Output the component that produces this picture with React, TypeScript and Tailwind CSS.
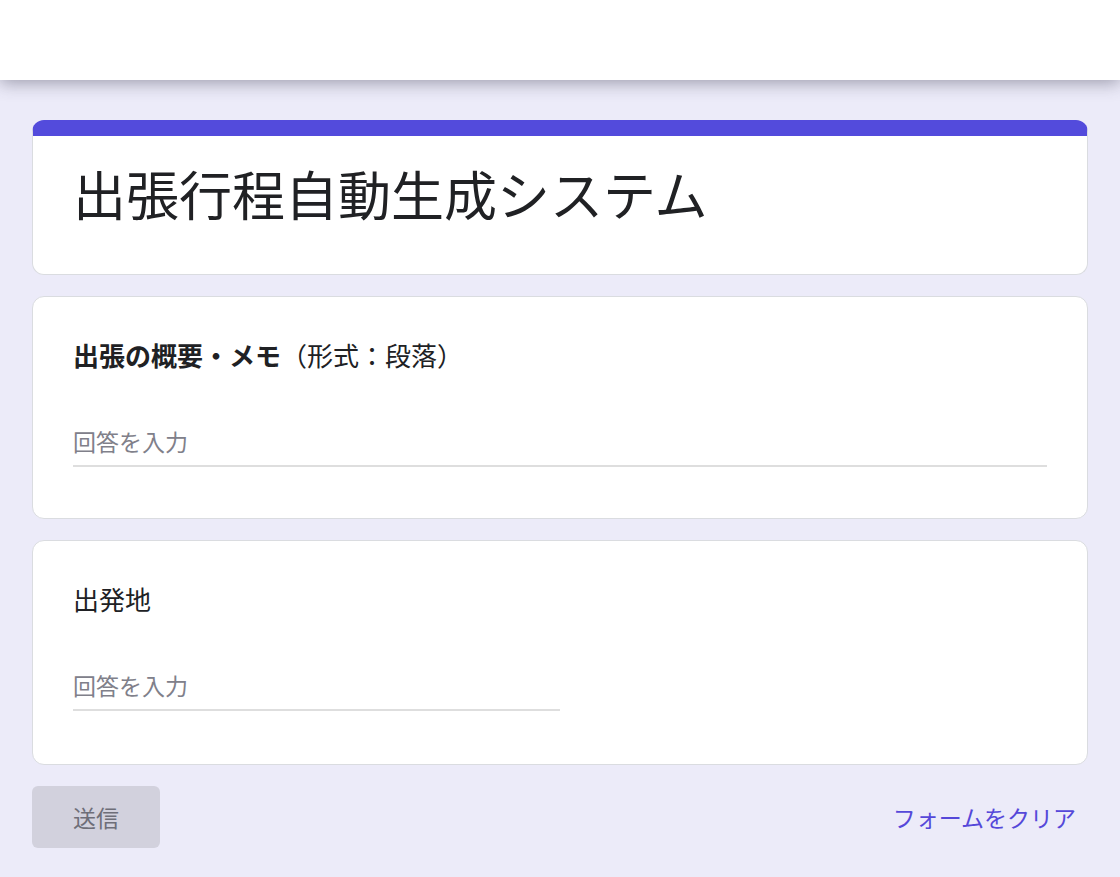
import { useState } from "react";

const font = {
  fontFamily: '"Noto Sans CJK JP", "Noto Sans", sans-serif',
};

function QuestionCard({
  label,
  note,
  bold,
  half,
}: {
  label: string;
  note?: string;
  bold?: boolean;
  half?: boolean;
}) {
  const [value, setValue] = useState("");

  return (
    <section
      className={`rounded-xl border border-[#dadce0] bg-white px-10 pt-10 ${
        half ? "pb-[53px]" : "pb-[51px]"
      }`}
    >
      <div className="text-[26px] leading-9 text-[#202124]">
        <span className={bold ? "font-bold" : ""}>{label}</span>
        {note && <span>{note}</span>}
      </div>
      <input
        value={value}
        onChange={(e) => setValue(e.target.value)}
        placeholder="回答を入力"
        className={`mt-[52px] block border-b-2 border-[#dedede] bg-transparent pb-[7px] text-[23px] leading-[33px] text-[#202124] outline-none placeholder:text-[#80808a] ${
          half ? "w-1/2" : "w-full"
        }`}
      />
    </section>
  );
}

export default function App() {
  return (
    <div className="min-h-screen bg-[#ecebf9]" style={font}>
      <header className="relative z-10 h-20 bg-white shadow-[0_3px_16px_rgba(60,60,80,0.45)]" />

      <main className="flex flex-col gap-[21px] px-8 pt-10 pb-8">
        <section className="rounded-xl border border-t-[16px] border-[#dadce0] border-t-[#534bdc] bg-white px-10 pt-5 pb-[43px]">
          <h1 className="text-[53px] leading-[75px] text-[#202124]">
            出張行程自動生成システム
          </h1>
        </section>

        <QuestionCard label="出張の概要・メモ" note="（形式：段落）" bold />
        <QuestionCard label="出発地" half />

        <div className="flex items-center justify-between">
          <button className="h-[62px] w-[128px] rounded-md bg-[#d2d1dd] text-[23px] text-[#6e6e78]">
            送信
          </button>
          <button className="px-3 py-2 text-[23px] text-[#5548d9]">
            フォームをクリア
          </button>
        </div>
      </main>
    </div>
  );
}
